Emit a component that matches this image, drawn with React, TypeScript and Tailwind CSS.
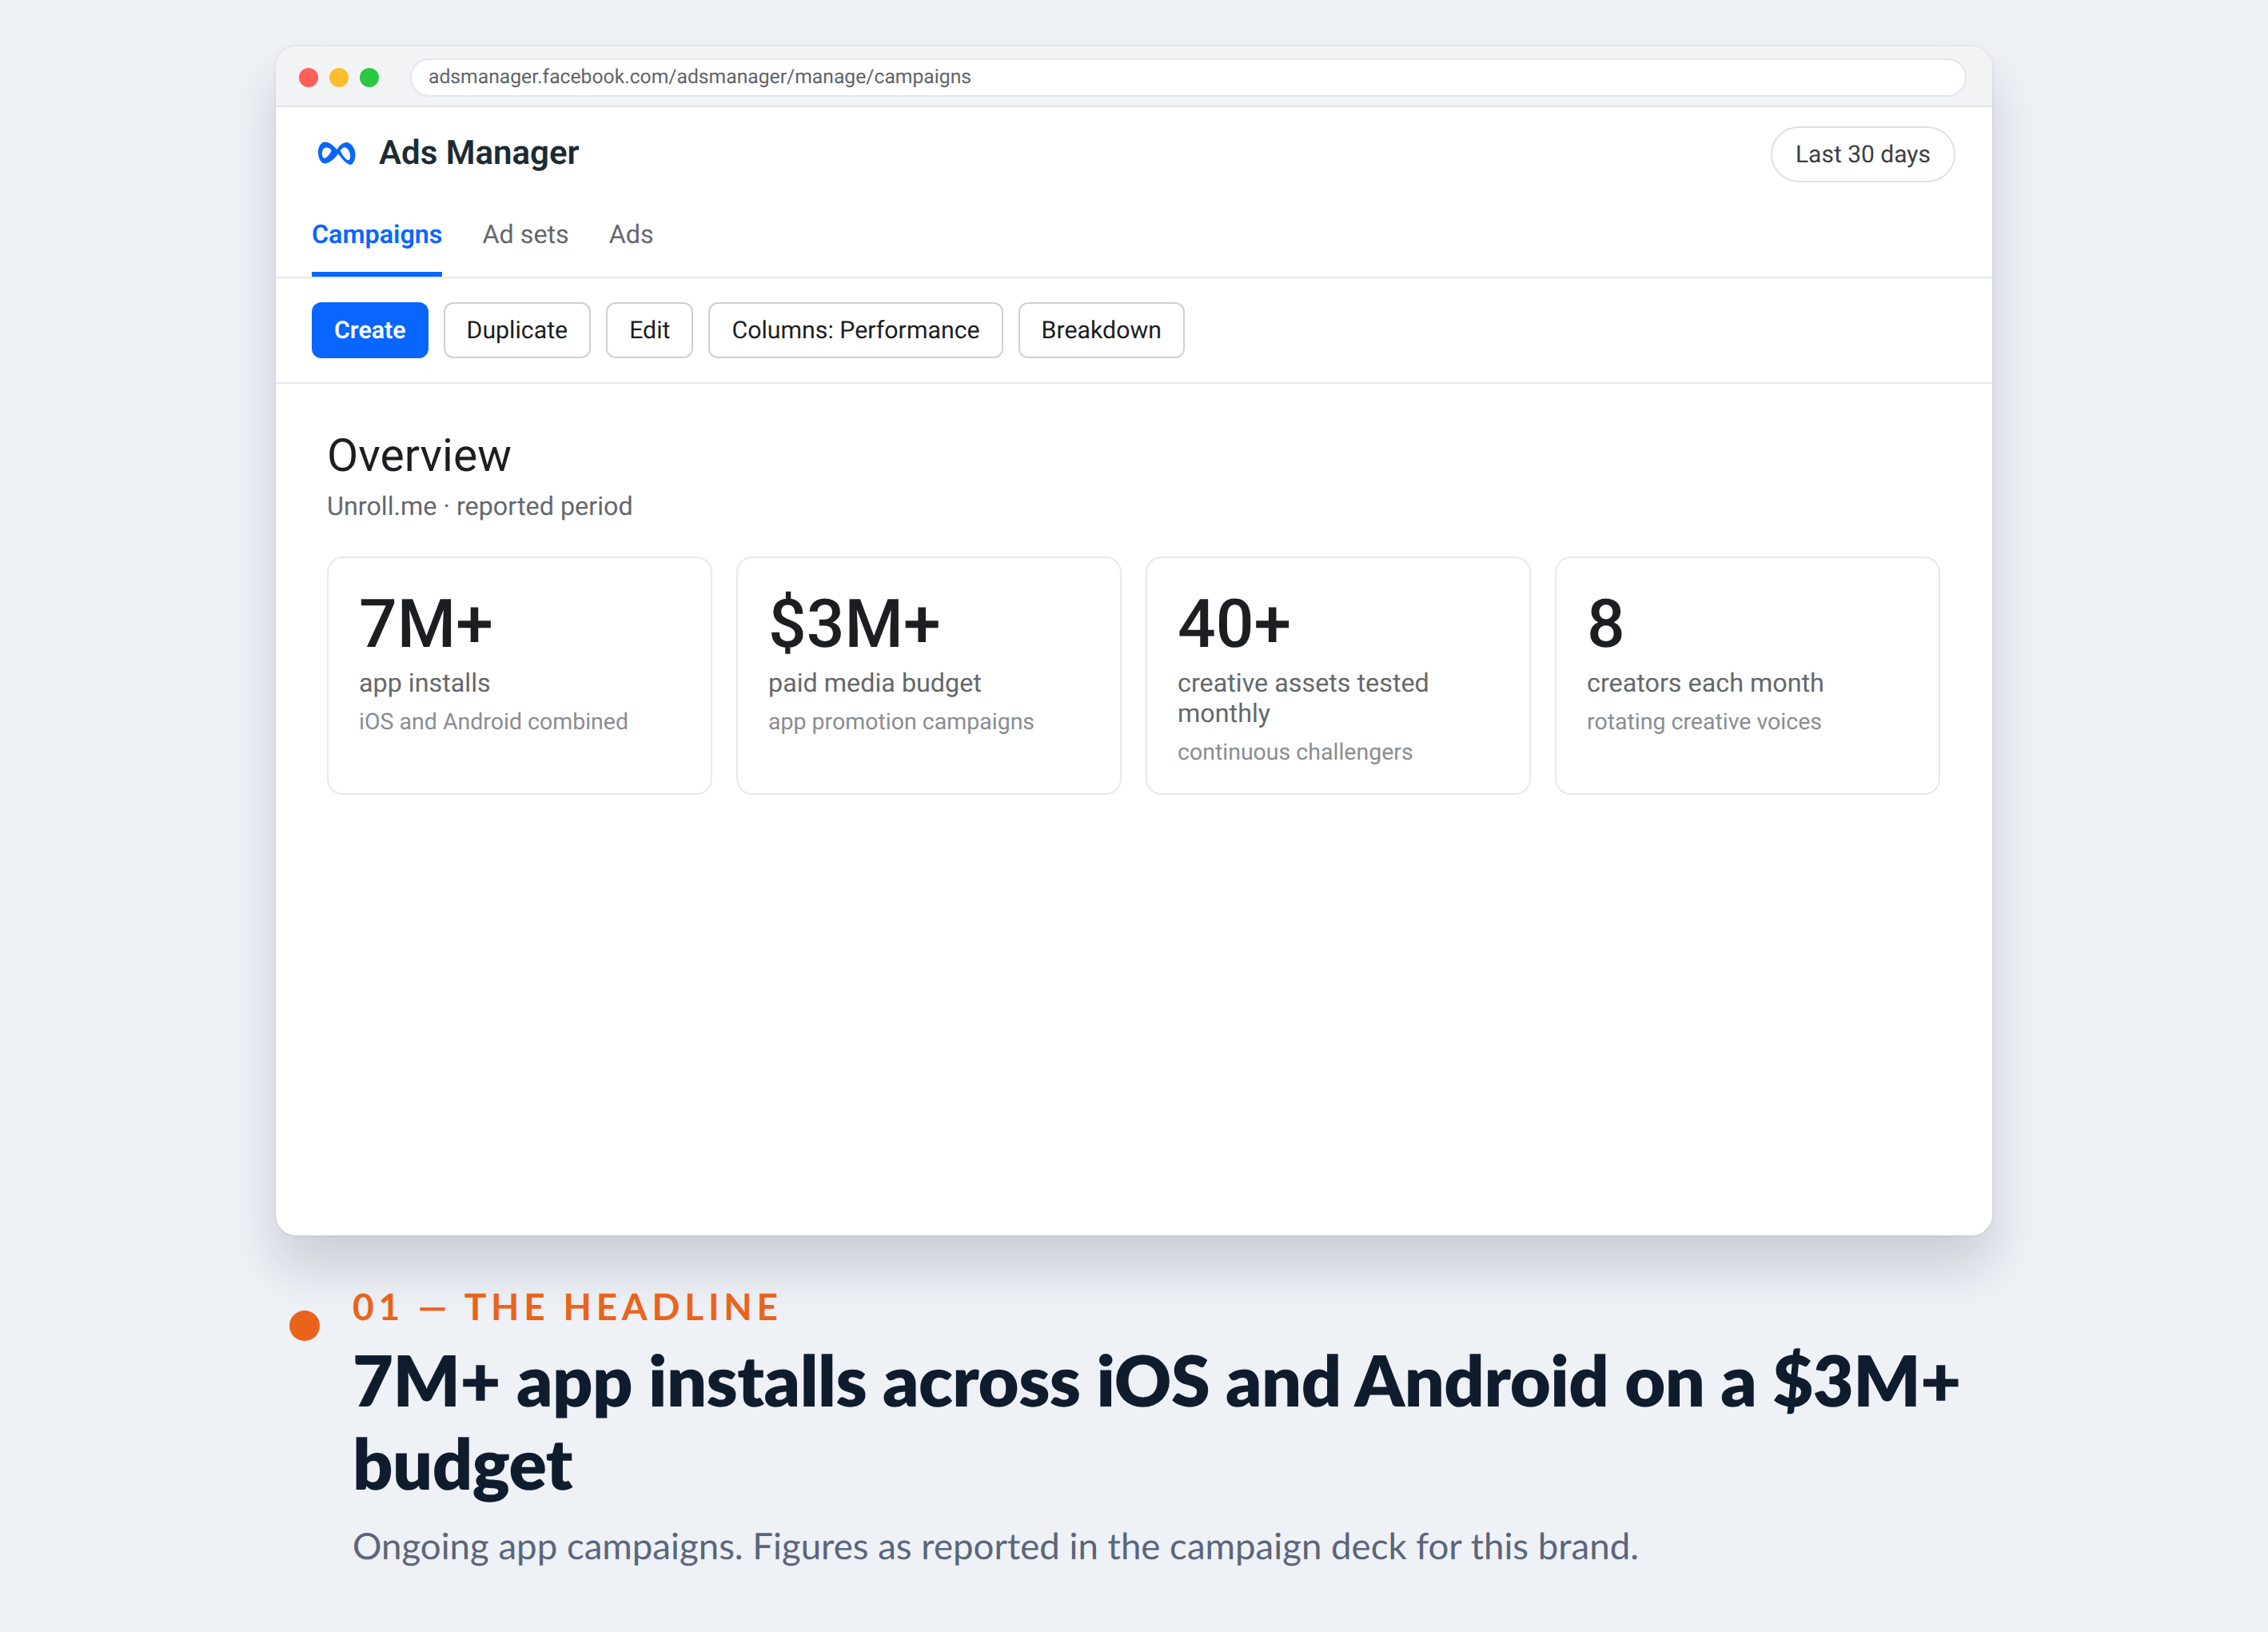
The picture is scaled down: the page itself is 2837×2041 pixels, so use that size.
const stats = [
  { value: "7M+", label: "app installs", note: "iOS and Android combined" },
  { value: "$3M+", label: "paid media budget", note: "app promotion campaigns" },
  { value: "40+", label: "creative assets tested monthly", note: "continuous challengers" },
  { value: "8", label: "creators each month", note: "rotating creative voices" },
];

const actions = ["Duplicate", "Edit", "Columns: Performance", "Breakdown"];

function MetaMark() {
  return (
    <svg viewBox="0 0 48 29" className="w-[48px] h-[31px]" aria-hidden="true">
      <path
        fill="#0866ff"
        fillRule="evenodd"
        d="M1 14.500C.6 6.500 4.500 .8 9 .5C15.500 .6 20 5 24.500 10C28 4.500 32 .8 37 1C43 2 47.800 9 47.500 17C47 25 44 29 41 29C36 28 30.500 21 26 15.500C22 21 15 27.500 9 27.500C4 27 1.300 20.500 1 14.500ZM5.800 15C5.800 11 8 7.500 11 7.500C14 7.500 17 9.500 17.500 11.500C16.500 14.500 12 20.500 9 20.800C7 20.800 5.800 18 5.800 15ZM28.500 11.500C31 8 33.500 6.500 35.500 7.500C39 9.500 42 15 41 20C40.500 23.500 38 24 36 22C33 19.500 30.500 15 28.500 11.500Z"
      />
    </svg>
  );
}

export default function App() {
  return (
    <div className="w-[2837px] h-[2041px] bg-[#eef1f6] pt-[58px] pl-[345px] overflow-hidden font-['Roboto',sans-serif] [text-rendering:geometricPrecision]">
      <div className="w-[2147px] h-[1487px] bg-white rounded-[26px] overflow-hidden shadow-[0_0_0_2px_rgba(15,23,42,0.04),0_40px_64px_rgba(15,23,42,0.16)] flex flex-col">
        <div className="h-[76px] shrink-0 bg-[#f1f3f5] border-b-2 border-[#e3e6ec] flex items-center pl-[29px] pr-[32px] pt-[3px]">
          <div className="flex gap-[14px] shrink-0">
            <span className="w-[24px] h-[24px] rounded-full bg-[#ff5f57]" />
            <span className="w-[24px] h-[24px] rounded-full bg-[#febc2e]" />
            <span className="w-[24px] h-[24px] rounded-full bg-[#28c840]" />
          </div>
          <div className="ml-[39px] flex-1 h-[48px] bg-white border-2 border-[#e3e6ec] rounded-full flex items-center pl-[21px] text-[24.7px] text-[#5f6368]">
            adsmanager.facebook.com/adsmanager/manage/campaigns
          </div>
        </div>
        <div className="h-[96px] shrink-0 flex items-center justify-between pl-[52px] pr-[46px] pt-[22px]">
          <div className="flex items-center gap-[29px] mb-[4px]">
            <MetaMark />
            <span className="text-[42px] font-semibold text-[#1c2b33]">Ads Manager</span>
          </div>
          <div className="h-[70px] px-[29px] flex items-center rounded-full border-2 border-[#dfe1e6] text-[30px] text-[#3c4043]">Last 30 days</div>
        </div>
        <div className="h-[118px] shrink-0 border-b-2 border-[#e3e6ec] flex gap-[50px] pl-[45px] items-stretch">
          <div className="pt-[39px] border-b-[6px] border-[#0866ff] text-[32.3px] font-semibold text-[#0866ff]">Campaigns</div>
          <div className="pt-[39px] text-[32.3px] text-[#65676b]">Ad sets</div>
          <div className="pt-[39px] text-[32.3px] text-[#65676b]">Ads</div>
        </div>
        <div className="shrink-0 border-b-2 border-[#e3e6ec] flex gap-[19px] pl-[45px] pt-[30px] pb-[30px]">
          <div className="h-[70px] px-[28px] pt-[2px] rounded-[12px] bg-[#0866ff] text-white font-semibold text-[30.3px] flex items-center">Create</div>
          {actions.map((a) => (
            <div key={a} className="h-[70px] px-[27px] pt-[2px] rounded-[12px] border-2 border-[#ced0d4] bg-white text-[#1c1e21] text-[30.3px] flex items-center">{a}</div>
          ))}
        </div>
        <div className="flex-1 pl-[64px] pr-[65px] pt-[56px]">
          <div className="text-[57px] leading-[68px] text-[#1c1e21]">Overview</div>
          <div className="mt-[7px] text-[32.3px] leading-[44px] text-[#65676b]">Unroll.me · reported period</div>
          <div className="mt-[41px] grid grid-cols-4 gap-[30px]">
            {stats.map((s) => (
              <div key={s.value} className="h-[298px] rounded-[20px] border-2 border-[#e7e9ed] px-[38px] pt-[37px]">
                <div className="text-[84px] leading-[92px] font-medium text-[#1c1e21]">{s.value}</div>
                <div className="mt-[8px] text-[32.3px] leading-[38px] text-[#65676b]">{s.label}</div>
                <div className="mt-[11px] text-[28.5px] leading-[38px] text-[#8a8d91]">{s.note}</div>
              </div>
            ))}
          </div>
        </div>
      </div>
      <div className="relative mt-[61px] pl-[96px] w-[2147px] font-['Lato',sans-serif]">
        <span className="absolute left-[17px] top-[33px] w-[38px] h-[38px] rounded-full bg-[#ea631a]" />
        <div className="text-[46px] leading-[56px] font-bold tracking-[0.125em] text-[#ea631a]">01 — THE HEADLINE</div>
        <div className="mt-[11px] text-[88px] leading-[104px] font-extrabold tracking-[-0.0057em] text-[#0f1c2e]">7M+ app installs across iOS and Android on a $3M+ budget</div>
        <div className="mt-[20px] text-[45.6px] leading-[64px] text-[#5a667a]">Ongoing app campaigns. Figures as reported in the campaign deck for this brand.</div>
      </div>
    </div>
  );
}
